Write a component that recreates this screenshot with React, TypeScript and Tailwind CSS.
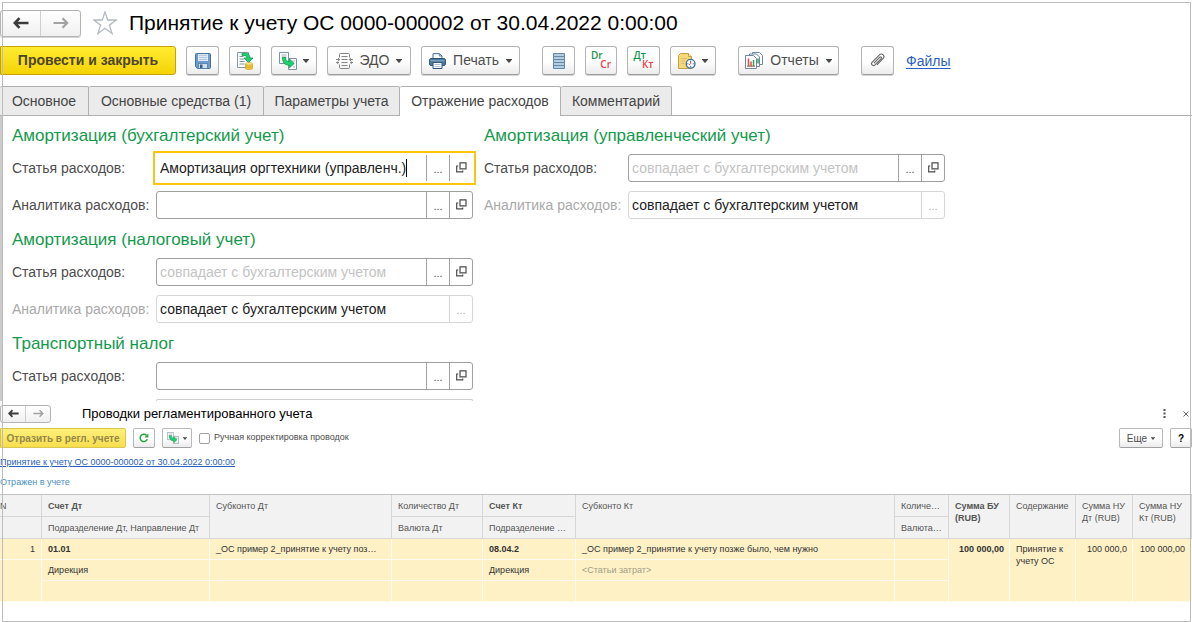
import type { ReactNode } from "react";

const toolButton =
  "flex h-[29px] shrink-0 items-center justify-center rounded-[3px] border border-[#b4b4b4] border-b-[#9c9c9c] bg-linear-to-b from-white from-50% to-[#ececec] text-[14px] text-[#4d4d4d] shadow-[0_1px_0_#d4d4d4]";
const smallButton =
  "flex h-5 shrink-0 items-center justify-center rounded-[2px] border border-[#b8b8b8] border-b-[#a0a0a0] bg-linear-to-b from-white from-50% to-[#ececec] text-[10px] text-[#4d4d4d]";

function Caret({ small = false }: { small?: boolean }) {
  return (
    <svg className={small ? "h-[3px] w-1" : "h-1 w-[6px]"} viewBox="0 0 6 4" aria-hidden="true">
      <path d="M0 0h6v.6L3.400 3.800h-.8L0 .6z" fill="#4a4a4a" />
    </svg>
  );
}

function Arrow({ back = false, small = false }: { back?: boolean; small?: boolean }) {
  return (
    <svg className={small ? "h-[9px] w-[11px]" : "h-3 w-4"} viewBox="0 0 16 12" fill="none" stroke={back ? "#3c3c3c" : "#a2a2a2"} strokeWidth={back ? 2.6 : 2.2} aria-hidden="true">
      {back ? <path d="M15.5 6H2M6.5 1.2 1.8 6l4.700 4.800" /> : <path d="M.5 6H14M9.500 1.200 14.200 6 9.500 10.800" />}
    </svg>
  );
}

function Star() {
  return (
    <svg className="size-6 shrink-0" viewBox="0 0 24 24" fill="#fff" stroke="#b3bac2" strokeWidth="1.300" aria-hidden="true">
      <path d="M12 .9l2.700 8.100h8.700l-7 5.100 2.700 8.500L12 17.300l-7.100 5.300 2.700-8.500-7-5.100h8.700z" />
    </svg>
  );
}

function SaveIcon() {
  return (
    <svg className="size-4" viewBox="0 0 16 16" aria-hidden="true">
      <path d="M.5 1.500q0-1 1-1h13q1 0 1 1v13q0 1-1 1H2.500l-2-2z" fill="#6c9bcd" stroke="#44719f" />
      <path d="M3 1h10v7H3z" fill="#dfeaf4" />
      <path d="M4 2.500h8M4 4.500h8M4 6.500h8" stroke="#a7bfd6" strokeWidth=".8" />
      <path d="M3.500 10.500h9v5h-9z" fill="#d5dde5" stroke="#44719f" strokeWidth=".7" />
      <path d="M5 11.500h2.500V15H5z" fill="#305f92" />
    </svg>
  );
}

function PostIcon() {
  return (
    <svg className="h-[18px] w-[18px]" viewBox="0 0 18 18" aria-hidden="true">
      <path d="M1.500.5h11v15h-11z" fill="#fff" stroke="#8798a8" />
      <path d="M3.500 4.500h4M3.500 7h5M3.500 9.500h5M3.500 12h5" stroke="#7f93a5" />
      <path d="M6 1.500c5-1 8 .5 8 4.500h3l-4.500 4.500L8 6h3c0-2-2-2.700-5-2.500z" fill="#1fd073" stroke="#0b9c4a" strokeWidth=".8" />
      <path d="M9.500 12v4.500c0 1.600 7 1.600 7 0V12z" fill="#f2c73c" stroke="#c49a20" strokeWidth=".6" />
      <ellipse cx="13" cy="11.800" rx="3.500" ry="1.300" fill="#ffe98a" stroke="#c49a20" strokeWidth=".6" />
      <path d="M9.500 14.200c0 1.600 7 1.600 7 0" fill="none" stroke="#c49a20" strokeWidth=".7" />
    </svg>
  );
}

function CreateFromIcon({ small = false }: { small?: boolean }) {
  return (
    <svg className={small ? "size-3" : "size-[18px]"} viewBox="0 0 18 18" aria-hidden="true">
      <path d="M.5.500h9v11h-9z" fill="#fff" stroke="#7c91a5" />
      <path d="M2.500 3h5M2.500 5h5" stroke="#9dadbb" />
      <path d="M9.500 6.500h8v11h-8z" fill="#fff" stroke="#7c91a5" />
      <path d="M13.500 9h2.500M14 15h2" stroke="#9dadbb" />
      <path d="M3.500 5.500h3.200c0 3 1 4 3.800 4V7l4.700 4.500-4.700 4.300v-2.600c-5 0-7-2.700-7-7.700z" fill="#1fd073" stroke="#0b9c4a" strokeWidth=".8" />
    </svg>
  );
}

function EdoIcon() {
  return (
    <svg className="h-4 w-[17px]" viewBox="0 0 17 16" fill="none" stroke="#858585" aria-hidden="true">
      <path d="M3.500 4.500v-3q0-1 1-1h8q1 0 1 1v3M3.500 11.500v3q0 1 1 1h8q1 0 1-1v-3" />
      <path d="M5.500 3.500h6M5.500 6.500h6M5.500 9.500h6M5.500 12.500h6" />
      <path d="M0 6.500h3M17 6.500h-3M0 9.500h3M17 9.500h-3" />
      <path d="M2 4.500v4l2.200-2zM15 4.500v4l-2.200-2zM2.200 8v3.500L.2 9.500zM14.800 8v3.500l2-2z" fill="#858585" stroke="none" />
    </svg>
  );
}

function PrintIcon() {
  return (
    <svg className="h-4 w-[17px]" viewBox="0 0 17 16" aria-hidden="true">
      <path d="M4 6V.7h6.500L13 3v3" fill="#fff" stroke="#426c93" />
      <path d="M10.300.7V3H13" fill="none" stroke="#426c93" strokeWidth=".8" />
      <rect x=".6" y="5.500" width="15.800" height="7" rx="1.500" fill="#4c789f" stroke="#2e5478" />
      <path d="M1.500 7.800h14" stroke="#8fb0cb" />
      <path d="M4 9.500h9v6H4z" fill="#fff" stroke="#2e5478" />
      <path d="M5.500 11.500h6M5.500 13.500h6" stroke="#9db4c8" strokeWidth=".8" />
    </svg>
  );
}

function ListIcon() {
  return (
    <svg className="h-4 w-3" viewBox="0 0 12 16" aria-hidden="true">
      <path d="M.5.500h11v15H.5z" fill="#b4cde0" stroke="#6389a8" />
      <path d="M1 3.500h10M1 6.500h10M1 9.500h10M1 12.500h10" stroke="#6389a8" />
    </svg>
  );
}

function NoteIcon() {
  return (
    <svg className="h-4 w-[18px]" viewBox="0 0 18 16" aria-hidden="true">
      <path d="M2.500.500h8l3 3v12H.5v-13z" fill="#f5d878" stroke="#c5a043" />
      <path d="M10.500.500v3h3" fill="#fff0b8" stroke="#c5a043" />
      <path d="M3 5.500h6M3 8h4M3 10.500h3" stroke="#dfc066" />
      <circle cx="12.600" cy="10.800" r="4.400" fill="#fff" stroke="#47759f" strokeWidth="1.400" />
      <path d="M12.600 7.500V9M12.600 12.800v1.500M9.200 10.800h1.300M14.700 10.800H16" stroke="#47759f" />
      <path d="M12.600 10.800V8.700M12.600 10.800l-1.500 1" stroke="#d44" />
    </svg>
  );
}

function ReportIcon() {
  return (
    <svg className="h-[17px] w-[18px]" viewBox="0 0 18 17" aria-hidden="true">
      <path d="M7.500.500h7l3 3v9h-10z" fill="#fff" stroke="#6f879c" />
      <path d="M4.500 2h7l3 3v9.500h-10z" fill="#fff" stroke="#6f879c" />
      <path d="M.5 3.500h8l3 3v10H.5z" fill="#fff" stroke="#6f879c" />
      <path d="M3.500 6.500v7.500M6 9.500V14" stroke="#e04a3f" strokeWidth="1.500" />
      <path d="M8.500 8v6M13 6.500v5" stroke="#27a65a" strokeWidth="1.500" />
      <path d="M2 14.200h8" stroke="#8c5a3c" />
    </svg>
  );
}

function ClipIcon() {
  return (
    <svg className="size-[15px]" viewBox="0 0 16 16" fill="none" stroke="#666" strokeWidth="1.200" aria-hidden="true">
      <path d="M4.200 10.800 10.500 4.500c1-1 2.400.3 1.400 1.400l-6.600 6.700c-2.200 2.100-5-.7-2.900-2.900l7.400-7.500c3-2.900 6.900.9 4 3.900l-6.400 6.600" />
    </svg>
  );
}

function OpenIcon() {
  return (
    <svg className="size-[11px]" viewBox="0 0 11 11" fill="none" stroke="#4a4a4a" strokeWidth="1.200" aria-hidden="true">
      <path d="M4 .800h6v6H4z" />
      <path d="M2.300 4H.700v5.800h6V8.500" />
    </svg>
  );
}

function RefreshIcon() {
  return (
    <svg className="size-[10px]" viewBox="0 0 10 10" aria-hidden="true">
      <path d="M8.300 6.300A3.700 3.700 0 1 1 7.600 2.400" fill="none" stroke="#25a33c" strokeWidth="1.500" />
      <path d="M9.400.400v4H5.500z" fill="#25a33c" />
    </svg>
  );
}

function DebitCredit({ top, bottom }: { top: string; bottom: string }) {
  return (
    <span className="flex w-5 flex-col pb-px font-['Open_Sans',sans-serif] text-[10px] leading-[9px] font-semibold">
      <span className="text-left text-[#12964a]">{top}</span>
      <span className="text-right text-[#e8414a]">{bottom}</span>
    </span>
  );
}

type FieldProps = {
  id: string;
  label: string;
  value?: string;
  placeholder?: string;
  disabled?: boolean;
  focused?: boolean;
};

function Field({ id, label, value = "", placeholder, disabled = false, focused = false }: FieldProps) {
  const line = disabled ? "border-[#d6d6d6]" : "border-[#a0a0a0]";
  const frame = focused ? "border-transparent outline-2 outline-offset-1 outline-[#fac40f]" : `rounded-[3px] ${line}`;
  return (
    <div className="flex h-[37px] items-center">
      <label htmlFor={id} className={`w-[144px] shrink-0 pt-px whitespace-nowrap ${disabled ? "text-[#a9a9a9]" : "text-[#4d4d4d]"}`}>
        {label}
      </label>
      <div className={`flex h-7 w-[317px] items-stretch border bg-white ${frame}`}>
        <div className="flex min-w-0 flex-1 items-center pt-px pl-[3px]">
          <input
            id={id}
            defaultValue={value}
            placeholder={placeholder}
            readOnly={disabled}
            className={`min-w-0 text-[#222] outline-none placeholder:text-[#c3c3c3] ${focused ? "field-sizing-content" : "w-full"}`}
          />
          {focused && <span className="h-[18px] w-px bg-black" />}
        </div>
        <button type="button" aria-label="Выбрать" className={`w-[23px] border-l pt-1 text-[11px] leading-none ${line} ${disabled ? "text-[#aaa]" : "text-[#4d4d4d]"}`}>
          ...
        </button>
        {!disabled && (
          <button type="button" aria-label="Открыть" className={`flex w-[23px] items-center justify-center border-l pb-px ${line}`}>
            <OpenIcon />
          </button>
        )}
      </div>
    </div>
  );
}

function Section({ title, children }: { title: string; children: ReactNode }) {
  return (
    <section>
      <h2 className="h-[30px] text-[17px] leading-[34px] whitespace-nowrap text-[#149a4c]">{title}</h2>
      {children}
    </section>
  );
}

function NavButtons({ small = false }: { small?: boolean }) {
  return (
    <div className={`flex shrink-0 rounded-[3px] border border-[#b4b4b4] bg-linear-to-b from-white to-[#f0f0f0] ${small ? "h-[18px] w-[51px]" : "h-[27px] w-[81px] shadow-[0_1px_0_#d4d4d4]"}`}>
      <button type="button" aria-label="Назад" className="flex flex-1 items-center justify-center border-r border-[#cfcfcf]">
        <Arrow back small={small} />
      </button>
      <button type="button" aria-label="Вперед" className="flex flex-1 items-center justify-center">
        <Arrow small={small} />
      </button>
    </div>
  );
}

const tabs = [
  { title: "Основное", width: "w-[89px]" },
  { title: "Основные средства (1)", width: "w-[175px]" },
  { title: "Параметры учета", width: "w-[136px]" },
  { title: "Отражение расходов", width: "w-[161px]", active: true },
  { title: "Комментарий", width: "w-[111px]" },
];

function DocumentForm() {
  return (
    <main>
      <header className="flex h-[46px] items-center gap-3">
        <NavButtons />
        <Star />
        <h1 className="text-[21px] whitespace-nowrap text-black">Принятие к учету ОС 0000-000002 от 30.04.2022 0:00:00</h1>
      </header>
      <div className="flex h-10 items-start gap-[10px]">
        <button type="button" className="h-[29px] w-[176px] shrink-0 rounded-r-[3px] border border-[#c3a306] bg-linear-to-b from-[#ffec2e] to-[#f5d300] text-[14px] font-bold text-[#4d4528]">
          Провести и закрыть
        </button>
        <button type="button" aria-label="Записать" className={`${toolButton} w-[33px]`}><SaveIcon /></button>
        <button type="button" aria-label="Провести" className={`${toolButton} w-8`}><PostIcon /></button>
        <button type="button" aria-label="Создать на основании" className={`${toolButton} w-[46px] gap-[6px]`}><CreateFromIcon /><Caret /></button>
        <button type="button" className={`${toolButton} w-[84px] gap-[7px]`}><EdoIcon />ЭДО<Caret /></button>
        <button type="button" className={`${toolButton} w-[99px] gap-[7px]`}><PrintIcon />Печать<Caret /></button>
        <button type="button" aria-label="Движения" className={`${toolButton} ml-3 w-[33px]`}><ListIcon /></button>
        <button type="button" className={`${toolButton} w-8`}><DebitCredit top="Dr" bottom="Cr" /></button>
        <button type="button" className={`${toolButton} w-[33px]`}><DebitCredit top="Дт" bottom="Кт" /></button>
        <button type="button" aria-label="Напоминания" className={`${toolButton} w-[46px] gap-[6px]`}><NoteIcon /><Caret /></button>
        <button type="button" className={`${toolButton} ml-3 w-[101px] gap-[7px]`}><ReportIcon />Отчеты<Caret /></button>
        <button type="button" aria-label="Прикрепить" className={`${toolButton} ml-3 w-[33px]`}><ClipIcon /></button>
        <a href="#files" className="pl-[2px] text-[14px] leading-[30px] text-[#2a5fc0] underline underline-offset-2">Файлы</a>
      </div>
      <nav className="flex h-[30px] border-b border-[#b0b0b0]">
        {tabs.map((tab) => (
          <button
            key={tab.title}
            type="button"
            className={`${tab.width} shrink-0 rounded-t-[2px] border-t border-r border-[#b0b0b0] text-[14px] whitespace-nowrap text-[#444] ${tab.active ? "-mb-px bg-white pb-px" : "bg-[#ebebeb]"}`}
          >
            {tab.title}
          </button>
        ))}
      </nav>
      <div className="flex border-l-2 border-[#cccccc] pt-[3px] pl-[10px] text-[14px]">
        <div className="w-[472px] shrink-0">
          <Section title="Амортизация (бухгалтерский учет)">
            <Field id="acc-item" label="Статья расходов:" value="Амортизация оргтехники (управленч.)" focused />
            <Field id="acc-analytics" label="Аналитика расходов:" />
          </Section>
          <Section title="Амортизация (налоговый учет)">
            <Field id="tax-item" label="Статья расходов:" placeholder="совпадает с бухгалтерским учетом" />
            <Field id="tax-analytics" label="Аналитика расходов:" value="совпадает с бухгалтерским учетом" disabled />
          </Section>
          <Section title="Транспортный налог">
            <Field id="transport-item" label="Статья расходов:" />
            <div className="flex h-[7px] items-end pl-[144px]">
              <div className="h-[2px] w-[317px] rounded-t-[3px] border-x border-t border-[#cfcfcf]" />
            </div>
          </Section>
        </div>
        <div>
          <Section title="Амортизация (управленческий учет)">
            <Field id="mgmt-item" label="Статья расходов:" placeholder="совпадает с бухгалтерским учетом" />
            <Field id="mgmt-analytics" label="Аналитика расходов:" value="совпадает с бухгалтерским учетом" disabled />
          </Section>
        </div>
      </div>
    </main>
  );
}

const headBase = "border-r border-b border-[#d6d6d6] bg-[#f2f2f2] pt-[5px] pl-[6px] text-left align-top text-[#555]";
const head = `${headBase} h-[22px] whitespace-nowrap font-normal`;
const headStrong = `${headBase} h-[22px] font-bold`;
const headWrap = `${headBase} font-normal`;
const cell = "h-[21px] border-r border-b border-[#fffaf0] bg-[#fef1c6] px-[6px] pt-1 align-top whitespace-nowrap";
const cellWrap = "border-r border-b border-[#fffaf0] bg-[#fef1c6] pt-1 align-top";

function PostingsTable() {
  return (
    <table className="w-full table-fixed border-separate border-spacing-0 border-t border-[#c4c4c4] text-[9px] leading-3 text-[#333]">
      <colgroup>
        <col className="w-[42px]" />
        <col className="w-[168px]" />
        <col className="w-[182px]" />
        <col className="w-[91px]" />
        <col className="w-[93px]" />
        <col />
        <col className="w-[54px]" />
        <col className="w-[61px]" />
        <col className="w-[66px]" />
        <col className="w-[57px]" />
        <col className="w-[59px]" />
      </colgroup>
      <thead>
        <tr>
          <th className="h-[22px] border-r border-b border-[#d6d6d6] bg-[#f2f2f2] pt-[5px] text-left align-top font-normal text-[#555]">N</th>
          <th className={headStrong}>Счет Дт</th>
          <th rowSpan={2} className={head}>Субконто Дт</th>
          <th className={head}>Количество Дт</th>
          <th className={headStrong}>Счет Кт</th>
          <th rowSpan={2} className={head}>Субконто Кт</th>
          <th className={head}>Количе…</th>
          <th rowSpan={2} className={headStrong}>Сумма БУ (RUB)</th>
          <th rowSpan={2} className={headWrap}>Содержание</th>
          <th rowSpan={2} className={headWrap}>Сумма НУ Дт (RUB)</th>
          <th rowSpan={2} className={headWrap}>Сумма НУ Кт (RUB)</th>
        </tr>
        <tr>
          <th className={head} />
          <th className={head}>Подразделение Дт, Направление Дт</th>
          <th className={head}>Валюта Дт</th>
          <th className={head}>Подразделение …</th>
          <th className={head}>Валюта…</th>
        </tr>
      </thead>
      <tbody>
        <tr>
          <td className={`${cell} text-right`}>1</td>
          <td className={`${cell} font-bold`}>01.01</td>
          <td className={cell}>_ОС пример 2_принятие к учету поз…</td>
          <td className={cell} />
          <td className={`${cell} font-bold`}>08.04.2</td>
          <td className={cell}>_ОС пример 2_принятие к учету позже было, чем нужно</td>
          <td className={cell} />
          <td rowSpan={3} className={`${cellWrap} pr-[5px] text-right font-bold whitespace-nowrap`}>100 000,00</td>
          <td rowSpan={3} className={`${cellWrap} pl-[6px]`}>Принятие к учету ОС</td>
          <td rowSpan={3} className={`${cellWrap} pr-[5px] text-right whitespace-nowrap`}>100 000,0</td>
          <td rowSpan={3} className={`${cellWrap} pr-[6px] text-right whitespace-nowrap`}>100 000,00</td>
        </tr>
        <tr>
          <td rowSpan={2} className={cell} />
          <td className={cell}>Дирекция</td>
          <td className={cell} />
          <td className={cell} />
          <td className={cell}>Дирекция</td>
          <td className={`${cell} text-[#a39c86]`}>&lt;Статьи затрат&gt;</td>
          <td className={cell} />
        </tr>
        <tr>
          <td className={cell} />
          <td className={cell} />
          <td className={cell} />
          <td className={cell} />
          <td className={cell} />
          <td className={cell} />
        </tr>
      </tbody>
    </table>
  );
}

function PostingsWindow() {
  return (
    <section>
      <header className="flex h-[25px] items-center">
        <NavButtons small />
        <h2 className="pl-[31px] text-[13px] whitespace-nowrap text-black">Проводки регламентированного учета</h2>
        <div className="ml-auto flex items-center gap-3 pr-[2px] text-[#555]">
          <button type="button" aria-label="Меню" className="flex size-3 items-center justify-center">
            <svg className="h-[9px] w-[3px]" viewBox="0 0 3 9" fill="#555" aria-hidden="true"><path d="M.5 0h2v2h-2zM.5 3.500h2v2h-2zM.5 7h2v2h-2z" /></svg>
          </button>
          <button type="button" aria-label="Закрыть" className="flex size-2 items-center justify-center">
            <svg className="size-[6px]" viewBox="0 0 6 6" stroke="#666" aria-hidden="true"><path d="M.5.500l5 5M5.500.500l-5 5" /></svg>
          </button>
        </div>
      </header>
      <div className="flex h-6 items-center gap-[7px]">
        <button type="button" className="h-5 w-[126px] shrink-0 rounded-r-[2px] border border-[#d9c650] bg-linear-to-b from-[#fff07a] to-[#f7de4c] text-[10px] font-bold whitespace-nowrap text-[#938849]">
          Отразить в регл. учете
        </button>
        <button type="button" aria-label="Обновить" className={`${smallButton} w-[22px]`}><RefreshIcon /></button>
        <button type="button" aria-label="Создать на основании" className={`${smallButton} w-[30px] gap-1`}><CreateFromIcon small /><Caret small /></button>
        <label className="flex items-center gap-1 text-[9px] whitespace-nowrap text-[#4d4d4d]">
          <input type="checkbox" className="size-[11px] appearance-none rounded-[2px] border border-[#a0a0a0] bg-white" />
          Ручная корректировка проводок
        </label>
        <button type="button" className={`${smallButton} ml-auto w-11 gap-1`}>Еще<Caret small /></button>
        <button type="button" className={`${smallButton} w-[22px] font-bold text-black`}>?</button>
      </div>
      <div className="flex flex-col items-start text-[9px] leading-5">
        <a href="#document" className="pt-[2px] text-[#2a5fc0] underline underline-offset-1">Принятие к учету ОС 0000-000002 от 30.04.2022 0:00:00</a>
        <span className="pb-[2px] text-[#4a90c8]">Отражен в учете</span>
      </div>
      <PostingsTable />
    </section>
  );
}

export default function App() {
  return (
    <div className="relative min-h-screen overflow-hidden bg-white pb-5 font-['Liberation_Sans',Arial,sans-serif]">
      <DocumentForm />
      <PostingsWindow />
      <div className="pointer-events-none absolute inset-0 mt-[2px] mr-px ml-[2px] border border-[#bcbcbc]" />
    </div>
  );
}
